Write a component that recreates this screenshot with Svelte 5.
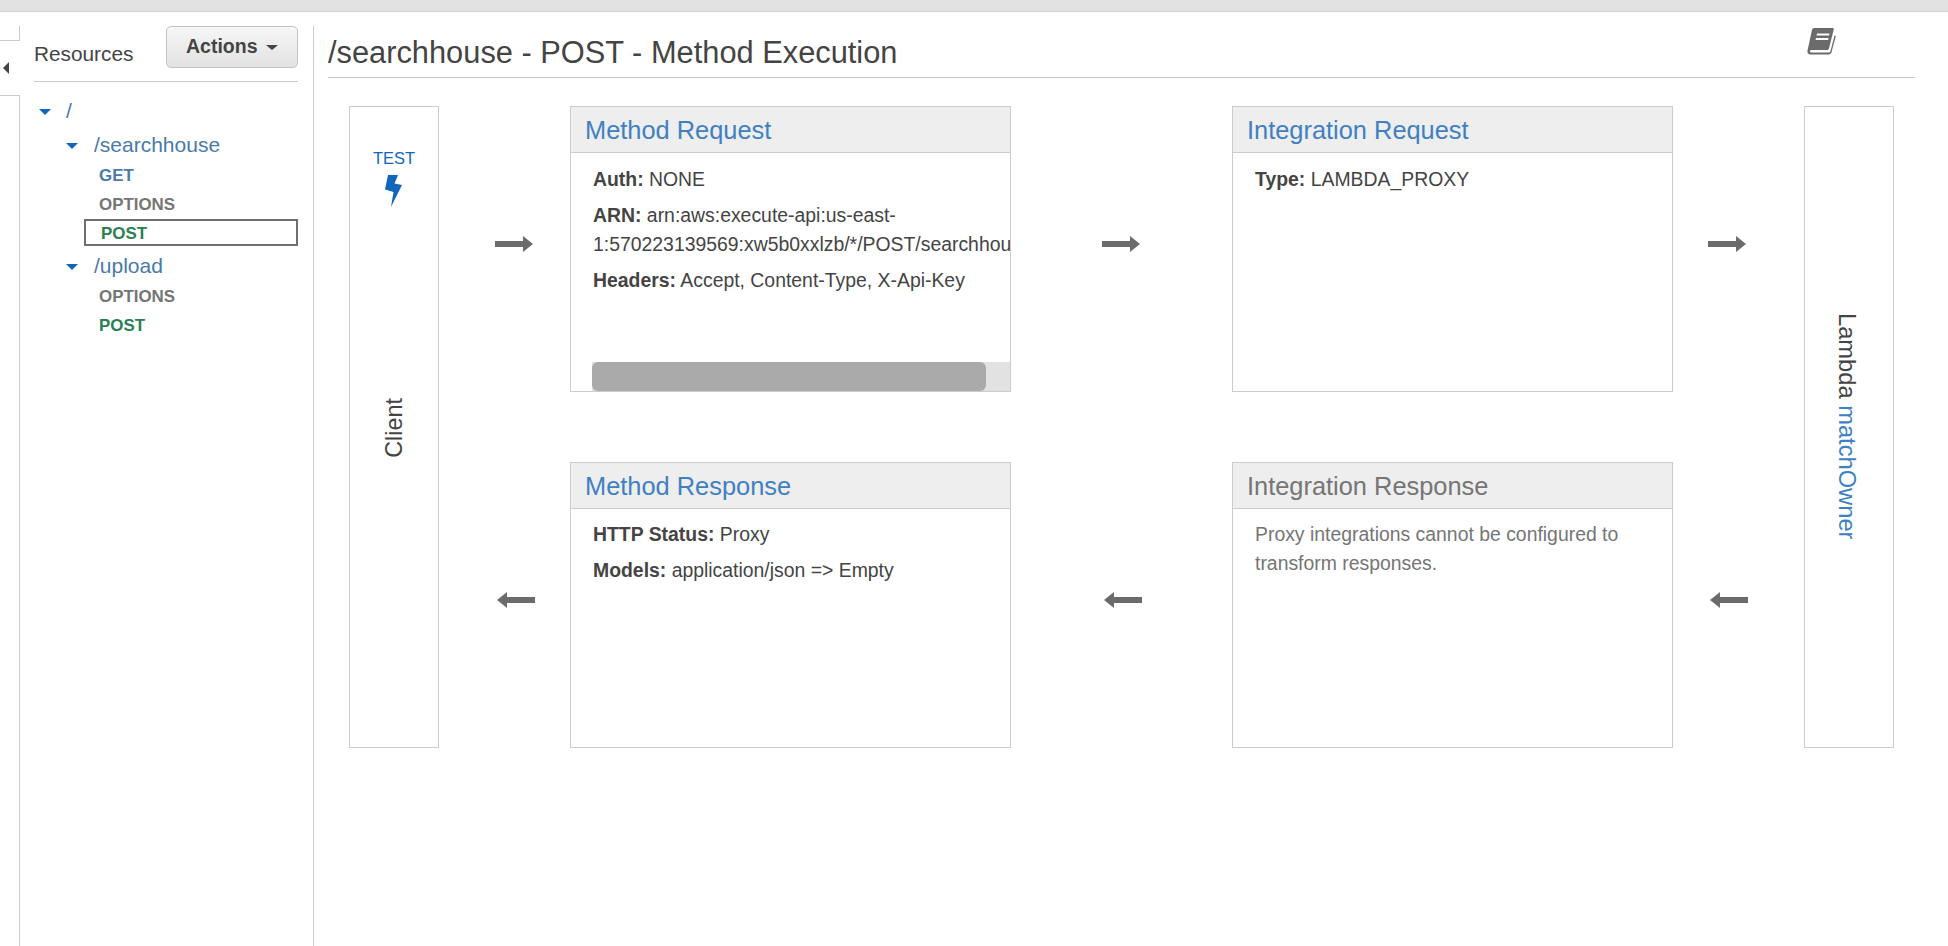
<script>
    const tree = [
        { path: "/searchhouse", methods: ["GET", "OPTIONS", "POST"], selected: "POST" },
        { path: "/upload", methods: ["OPTIONS", "POST"] },
    ];
</script>

{#snippet arrow(back)}
    <svg class="arrow" class:back width="40" height="18" viewBox="0 0 40 18">
        <path d="M1 6h28V1l10 8-10 8v-5H1z" fill="#6b6b6b" />
    </svg>
{/snippet}

<div class="topbar"></div>

<div class="page">
    <div class="strip">
        <div class="strip-top"></div>
        <div class="strip-toggle"><span class="toggle-arrow"></span></div>
        <div class="strip-bottom"></div>
    </div>

    <aside class="sidebar">
        <div class="side-head">
            <span class="side-title">Resources</span>
            <button class="actions">Actions <span class="caret"></span></button>
        </div>
        <div class="root"><span class="tri"></span><a href="#root">/</a></div>
        {#each tree as res}
            <div class="res"><span class="tri"></span><a href="#res">{res.path}</a></div>
            {#each res.methods as m}
                <div class="method {m.toLowerCase()}" class:selected={res.selected === m}>{m}</div>
            {/each}
        {/each}
    </aside>

    <main class="main">
        <div class="title-row">
            <h1>/searchhouse - POST - Method Execution</h1>
            <svg class="book" width="30" height="28" viewBox="0 0 30 28">
                <path d="M8 1h18.500c1 0 1.500.6 1.200 1.600L23 21.500c-.3.9-1 1.500-2 1.500H5c-1.500 0-1.500 2.500 0 2.500h17.500c1 0 1.700-.5 2-1.500l4-15.500 1.300.5-4.200 16c-.4 1.500-1.500 2.500-3 2.500H4.500C2 27.500 1 25.500 1.500 23.500L6 3c.3-1.200 1-2 2-2z" fill="#6b6b6b" />
                <path d="M11 6.500h12.500l-.5 2H10.500zM10 11h12.500l-.5 2H9.500z" fill="#fff" />
            </svg>
        </div>

        <div class="diagram">
            <div class="side-box client">
                <div class="test">
                    <span>TEST</span>
                    <svg width="18" height="32" viewBox="0 0 18 32">
                        <path d="M3 0H13L9.500 8.500 17 10 6 32 8.500 17 0 14.500Z" fill="#1166bb" />
                    </svg>
                </div>
                <span class="vertical client-label">Client</span>
            </div>

            <div class="cell-arrow c2 a-mreq">{@render arrow(false)}</div>

            <section class="card c3">
                <h2><a href="#mreq">Method Request</a></h2>
                <div class="card-body scrolled">
                    <div class="scroll-content">
                        <p><b>Auth:</b> NONE</p>
                        <p><b>ARN:</b> arn:aws:execute-api:us-east-<br />1:570223139569:xw5b0xxlzb/*/POST/searchhouse</p>
                        <p><b>Headers:</b> Accept, Content-Type, X-Api-Key</p>
                    </div>
                    <div class="scrollbar"><div class="thumb"></div></div>
                </div>
            </section>

            <div class="cell-arrow c4 a-ireq">{@render arrow(false)}</div>

            <section class="card c5">
                <h2><a href="#ireq">Integration Request</a></h2>
                <div class="card-body top-body"><p><b>Type:</b> LAMBDA_PROXY</p></div>
            </section>

            <div class="cell-arrow c6 a-fn">{@render arrow(false)}</div>

            <div class="side-box lambda">
                <span class="vertical lambda-label">Lambda <a href="#fn">matchOwner</a></span>
            </div>

            <div class="cell-arrow c2 row2 a-mres">{@render arrow(true)}</div>

            <section class="card c3 row2">
                <h2><a href="#mres">Method Response</a></h2>
                <div class="card-body">
                    <p><b>HTTP Status:</b> Proxy</p>
                    <p><b>Models:</b> application/json =&gt; Empty</p>
                </div>
            </section>

            <div class="cell-arrow c4 row2 a-ires">{@render arrow(true)}</div>

            <section class="card c5 row2">
                <h2 class="muted">Integration Response</h2>
                <div class="card-body"><p class="note">Proxy integrations cannot be configured to transform responses.</p></div>
            </section>

            <div class="cell-arrow c6 row2 a-back">{@render arrow(true)}</div>
        </div>
    </main>
</div>

<style>
    :global(body) {
        margin: 0;
        background: #fff;
        font-family: "Liberation Sans", Arial, sans-serif;
        color: #444;
        overflow: hidden;
    }

    a {
        color: #3f80c2;
        text-decoration: none;
    }

    .topbar {
        height: 11px;
        background: #e2e2e2;
        border-bottom: 1px solid #d4d4d4;
    }

    .page {
        display: flex;
        height: 934px;
    }

    /* collapsed nav strip */
    .strip {
        width: 20px;
        flex: none;
        padding-top: 14px;
        display: flex;
        flex-direction: column;
    }

    .strip-top {
        height: 14px;
        border-right: 1px solid #ccc;
        border-bottom: 1px solid #ccc;
    }

    .strip-toggle {
        height: 54px;
        display: flex;
        align-items: center;
        padding-left: 3px;
    }

    .toggle-arrow {
        width: 0;
        height: 0;
        border-top: 6px solid transparent;
        border-bottom: 6px solid transparent;
        border-right: 6px solid #444;
    }

    .strip-bottom {
        flex: 1;
        border-right: 1px solid #ccc;
        border-top: 1px solid #ccc;
    }

    .sidebar {
        width: 264px;
        flex: none;
        margin-top: 14px;
        padding: 0 15px 0 14px;
        border-right: 1px solid #ccc;
    }

    .side-head {
        display: flex;
        justify-content: space-between;
        height: 55px;
        border-bottom: 1px solid #ccc;
    }

    .side-title {
        font-size: 20.800px;
        margin-top: 16px;
    }

    .actions {
        width: 132px;
        height: 42px;
        border: 1px solid #c4c4c4;
        border-radius: 5px;
        background: linear-gradient(#f6f6f6, #e2e2e2);
        font: bold 19.500px "Liberation Sans", Arial, sans-serif;
        color: #444;
        padding: 0 0 1px;
    }

    .caret {
        display: inline-block;
        vertical-align: middle;
        margin-left: 3px;
        border-top: 5px solid #444;
        border-left: 6px solid transparent;
        border-right: 6px solid transparent;
    }

    .tri {
        display: inline-block;
        width: 0;
        height: 0;
        border-top: 6px solid #1166bb;
        border-left: 6px solid transparent;
        border-right: 6px solid transparent;
        vertical-align: middle;
    }

    .root, .res {
        font-size: 21px;
        line-height: 29px;
        height: 29px;
    }

    .root {
        padding-left: 5px;
        margin-top: 14px;
    }

    .root .tri { margin-right: 15px; }

    .res {
        padding-left: 32px;
        margin-top: 5px;
        margin-bottom: 2px;
    }

    .res .tri { margin-right: 16px; }

    .root a, .res a { color: #4a7aa8; }

    .method {
        font-size: 16.900px;
        font-weight: bold;
        height: 29px;
        line-height: 29px;
        padding-left: 65px;
    }

    .get { color: #4a7aa8; }
    .options { color: #757575; }
    .post { color: #2a8050; }

    .method.selected {
        margin-left: 50px;
        padding-left: 15px;
        height: 27px;
        line-height: 25px;
        border: 2px solid #6f6f6f;
        box-sizing: border-box;
    }

    .main {
        flex: 1;
        min-width: 0;
        padding: 0 33px 0 14px;
    }

    .title-row {
        display: flex;
        justify-content: space-between;
        height: 65px;
        border-bottom: 1px solid #ccc;
    }

    h1 {
        margin: 23px 0 0;
        font-size: 30.800px;
        font-weight: normal;
        line-height: 36px;
        color: #444;
    }

    .book {
        margin: 15px 79px 0 0;
    }

    .diagram {
        display: grid;
        grid-template-columns: 90px 131px 441px 221px 441px 131px 90px;
        grid-template-rows: 286px 286px;
        row-gap: 70px;
        margin: 28px 0 0 21px;
    }

    .side-box {
        grid-row: 1 / 3;
        border: 1px solid #ccc;
        box-sizing: border-box;
        display: flex;
        align-items: center;
        justify-content: center;
        position: relative;
    }

    .client { grid-column: 1; }
    .lambda { grid-column: 7; }

    .c2 { grid-column: 2; }
    .c3 { grid-column: 3; }
    .c4 { grid-column: 4; }
    .c5 { grid-column: 5; }
    .c6 { grid-column: 6; }
    .row2 { grid-row: 2; }

    .vertical {
        writing-mode: vertical-rl;
        color: #444;
    }

    .client-label {
        font-size: 23.400px;
        margin-top: 2px;
        transform: rotate(180deg);
    }

    .lambda-label {
        font-size: 23.700px;
        margin-right: 6px;
        margin-bottom: 2px;
    }

    .test {
        position: absolute;
        top: 42px;
        left: 0;
        right: 0;
        display: flex;
        flex-direction: column;
        align-items: center;
        gap: 7px;
        font-size: 16.500px;
        color: #1166bb;
    }

    .card {
        border: 1px solid #ccc;
        box-sizing: border-box;
        display: flex;
        flex-direction: column;
        min-width: 0;
    }

    .card h2 {
        margin: 0;
        height: 45px;
        line-height: 46px;
        padding-left: 14px;
        flex: none;
        background: #eee;
        border-bottom: 1px solid #ccc;
        font-size: 25.400px;
        font-weight: normal;
    }

    .card h2.muted { color: #757575; }

    .card-body {
        flex: 1;
        min-height: 0;
        padding: 11px 22px;
        font-size: 19.400px;
        line-height: 29px;
        color: #444;
    }

    .top-body { padding-top: 12px; }

    .card-body p { margin: 0 0 7px; }

    .note { color: #757575; }

    .scrolled {
        padding: 0 0 0 21px;
        display: flex;
        flex-direction: column;
        overflow: hidden;
    }

    .scroll-content {
        flex: 1;
        padding-top: 12px;
        padding-left: 1px;
        white-space: nowrap;
        overflow: hidden;
    }

    .scrollbar {
        height: 29px;
        background: #e2e2e2;
        flex: none;
    }

    .thumb {
        width: 394px;
        height: 100%;
        background: #aaa;
        border-radius: 6px;
    }

    .cell-arrow {
        display: flex;
        align-items: center;
        justify-content: center;
        padding-bottom: 10px;
    }

    .a-mreq { padding-left: 18px; }
    .a-ireq { padding-right: 2px; }
    .a-fn { padding-right: 23px; }
    .a-mres { padding-left: 22px; }
    .a-ires { padding-left: 2px; }
    .a-back { padding-right: 20px; }

    .arrow.back { transform: scaleX(-1); }
</style>
